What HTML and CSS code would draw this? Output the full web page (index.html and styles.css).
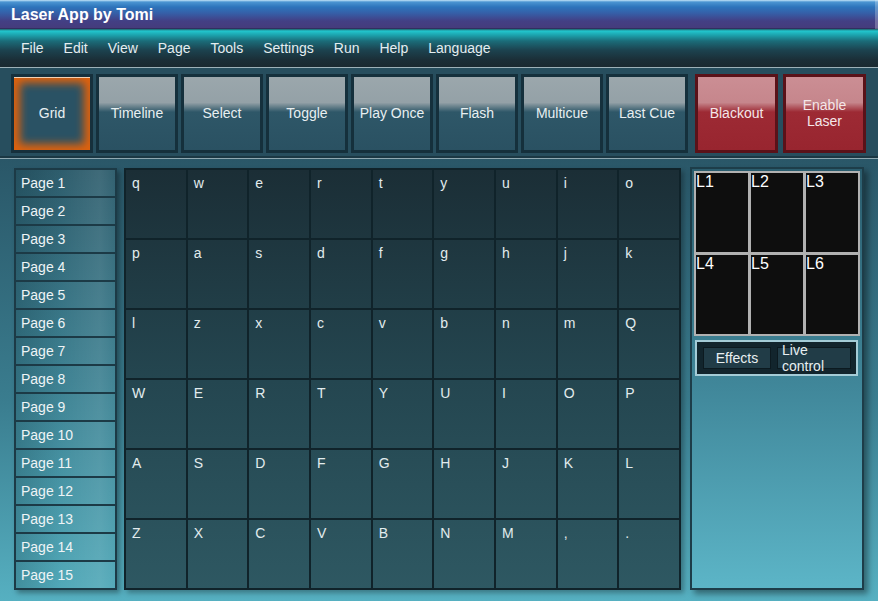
FILE: index.html
```html
<!DOCTYPE html>
<html>
<head>
<meta charset="utf-8">
<title>Laser App by Tomi</title>
<link rel="stylesheet" href="styles.css">
</head>
<body>
<div class="app">
  <header class="titlebar">Laser App by Tomi</header>
  <nav class="menubar">
    <span class="menu-item">File</span>
    <span class="menu-item">Edit</span>
    <span class="menu-item">View</span>
    <span class="menu-item">Page</span>
    <span class="menu-item">Tools</span>
    <span class="menu-item">Settings</span>
    <span class="menu-item">Run</span>
    <span class="menu-item">Help</span>
    <span class="menu-item">Language</span>
  </nav>
  <div class="toolbar">
    <div class="tb-group">
      <div class="tb-btn active">Grid</div>
      <div class="tb-btn">Timeline</div>
      <div class="tb-btn">Select</div>
      <div class="tb-btn">Toggle</div>
      <div class="tb-btn">Play Once</div>
      <div class="tb-btn">Flash</div>
      <div class="tb-btn">Multicue</div>
      <div class="tb-btn">Last Cue</div>
    </div>
    <div class="tb-group danger">
      <div class="tb-btn red">Blackout</div>
      <div class="tb-btn red">Enable<br>Laser</div>
    </div>
  </div>
  <main class="main">
    <aside class="pages">
      <div class="page">Page 1</div>
      <div class="page">Page 2</div>
      <div class="page">Page 3</div>
      <div class="page">Page 4</div>
      <div class="page">Page 5</div>
      <div class="page">Page 6</div>
      <div class="page">Page 7</div>
      <div class="page">Page 8</div>
      <div class="page">Page 9</div>
      <div class="page">Page 10</div>
      <div class="page">Page 11</div>
      <div class="page">Page 12</div>
      <div class="page">Page 13</div>
      <div class="page">Page 14</div>
      <div class="page">Page 15</div>
    </aside>
    <section class="grid">
      <div class="cell">q</div><div class="cell">w</div><div class="cell">e</div><div class="cell">r</div><div class="cell">t</div><div class="cell">y</div><div class="cell">u</div><div class="cell">i</div><div class="cell">o</div>
      <div class="cell">p</div><div class="cell">a</div><div class="cell">s</div><div class="cell">d</div><div class="cell">f</div><div class="cell">g</div><div class="cell">h</div><div class="cell">j</div><div class="cell">k</div>
      <div class="cell">l</div><div class="cell">z</div><div class="cell">x</div><div class="cell">c</div><div class="cell">v</div><div class="cell">b</div><div class="cell">n</div><div class="cell">m</div><div class="cell">Q</div>
      <div class="cell">W</div><div class="cell">E</div><div class="cell">R</div><div class="cell">T</div><div class="cell">Y</div><div class="cell">U</div><div class="cell">I</div><div class="cell">O</div><div class="cell">P</div>
      <div class="cell">A</div><div class="cell">S</div><div class="cell">D</div><div class="cell">F</div><div class="cell">G</div><div class="cell">H</div><div class="cell">J</div><div class="cell">K</div><div class="cell">L</div>
      <div class="cell">Z</div><div class="cell">X</div><div class="cell">C</div><div class="cell">V</div><div class="cell">B</div><div class="cell">N</div><div class="cell">M</div><div class="cell">,</div><div class="cell">.</div>
    </section>
    <aside class="side">
      <div class="lasers">
        <div class="laser">L1</div>
        <div class="laser">L2</div>
        <div class="laser">L3</div>
        <div class="laser">L4</div>
        <div class="laser">L5</div>
        <div class="laser">L6</div>
      </div>
      <div class="tabs">
        <div class="tab tab-effects">Effects</div>
        <div class="tab tab-live">Live<br>control</div>
      </div>
    </aside>
  </main>
</div>
</body>
</html>
```
FILE: styles.css
```css
* {
  box-sizing: border-box;
  margin: 0;
  padding: 0;
}

html, body {
  width: 878px;
  height: 601px;
  overflow: hidden;
}

body {
  font-family: "Liberation Sans", Arial, sans-serif;
  background: #2a5566;
  color: #e8eff1;
}

.app {
  display: flex;
  flex-direction: column;
  height: 601px;
}

/* ---------- title bar ---------- */
.titlebar {
  height: 29px;
  padding-left: 11px;
  font-size: 16px;
  font-weight: bold;
  line-height: 30px;
  color: #ffffff;
  background: linear-gradient(180deg, #c4e4f8 0, #4b95d2 2px, #2d74bb 7px, #3560a8 13px, #433f84 21px, #453c7c 28px, #1d2142 29px);
  box-shadow: inset -3px 0 0 rgba(255, 255, 255, 0.25);
}

/* ---------- menu bar ---------- */
.menubar {
  height: 39px;
  display: flex;
  padding-left: 21px;
  border-bottom: 1px solid #9db1b8;
  background: linear-gradient(180deg, #1f5c66 0, #22c6cd 2px, #1ca3ad 6px, #1b6c79 12px, #1c4350 21px, #1b2e37 31px, #1a2930 38px);
}

.menu-item {
  font-size: 14px;
  line-height: 38px;
  margin-right: 20px;
  color: #e4edf0;
}

/* ---------- toolbar ---------- */
.toolbar {
  height: 91px;
  display: flex;
  padding: 6px 0 0 11px;
  background: #274e5e;
  border-bottom: 1px solid #8ea8b1;
  box-shadow: inset 0 -2px 0 #1b3844;
}

.tb-group {
  display: flex;
  gap: 3px;
}

.tb-group.danger {
  margin-left: 7px;
  gap: 5px;
}

.tb-btn {
  width: 82px;
  height: 79px;
  padding-bottom: 2px;
  border: 3px solid #15303c;
  display: flex;
  align-items: center;
  justify-content: center;
  text-align: center;
  font-size: 14px;
  line-height: 16px;
  color: #e8eff1;
  background: linear-gradient(180deg, #9ba7ac 0, #94a1a7 35%, #2e5768 48%, #2a5162 100%);
}

.tb-btn.active {
  border-color: #16303c;
  background: #2a5264;
  box-shadow: inset 0 1px 0 #f3d2b4, inset 0 0 9px 6px #e0620d;
}

.tb-btn.red {
  width: 83px;
  border-color: #5a1219;
  color: #f4e6e8;
  background: linear-gradient(180deg, #cb8e94 0, #c6868c 35%, #9d2a34 48%, #98252f 100%);
}

/* ---------- main area ---------- */
.main {
  height: 442px;
  display: flex;
  align-items: flex-start;
  gap: 7px;
  padding: 9px 0 0 14px;
  background: linear-gradient(180deg, #2a5768 0, #3a7d8f 55%, #56b0c1 100%);
}

/* page list */
.pages {
  width: 103px;
  height: 422px;
  display: flex;
  flex-direction: column;
  gap: 2px;
  border: 2px solid #1c3a46;
  background: #1c3a46;
  box-shadow: 3px 3px 5px rgba(0, 0, 0, 0.35);
}

.page {
  height: 26px;
  padding-left: 5px;
  font-size: 14px;
  line-height: 26px;
  color: #eef4f6;
  background:
    linear-gradient(90deg, rgba(10, 35, 45, 0.18) 0, rgba(255, 255, 255, 0.02) 45%, rgba(255, 255, 255, 0.1) 85%, rgba(255, 255, 255, 0.04) 100%),
    linear-gradient(180deg, #2a5a6a 170px, #3a7f90 380px, #4ea7b7 590px);
  background-attachment: scroll, fixed;
}

/* keyboard grid */
.grid {
  width: 557px;
  height: 422px;
  display: grid;
  grid-template-columns: repeat(9, 1fr);
  grid-template-rows: repeat(6, 1fr);
  gap: 2px;
  border: 2px solid #10232a;
  background: #10232a;
  box-shadow: 3px 3px 5px rgba(0, 0, 0, 0.3);
}

.cell {
  padding: 5px 0 0 6px;
  font-size: 14px;
  line-height: 16px;
  color: #e2ecee;
  background: linear-gradient(180deg, #1b2e36 170px, #244650 380px, #2e5862 590px);
  background-attachment: fixed;
}

/* right side panel */
.side {
  width: 174px;
  height: 423px;
  margin: -1px 0 0 2px;
  padding: 2px 0 0 2px;
  border: 2px solid #1d3d49;
  background: linear-gradient(180deg, #2b5d6e 0, #3f8598 50%, #5cb5c7 100%);
  box-shadow: 4px 4px 6px rgba(0, 0, 0, 0.4);
}

.lasers {
  width: 166px;
  height: 165px;
  display: grid;
  grid-template-columns: repeat(3, 1fr);
  grid-template-rows: repeat(2, 1fr);
  gap: 3px;
  padding: 2px;
  background: #b1b1b1;
}

.laser {
  background: #0e0e0e;
  font-size: 16px;
  line-height: 18px;
  color: #ffffff;
}

.tabs {
  width: 163px;
  height: 36px;
  margin: 4px 0 0 1px;
  display: flex;
  gap: 6px;
  padding: 5px 5px 5px 6px;
  border: 2px solid #a4ccd7;
  background: #12252d;
}

.tab {
  height: 22px;
  display: flex;
  align-items: center;
  font-size: 14px;
  line-height: 16px;
  color: #e8eff1;
  background: #213c47;
  border: 1px solid #0c1a20;
}

.tab-effects {
  width: 68px;
  justify-content: center;
}

.tab-live {
  width: 74px;
  padding-left: 4px;
}
```
